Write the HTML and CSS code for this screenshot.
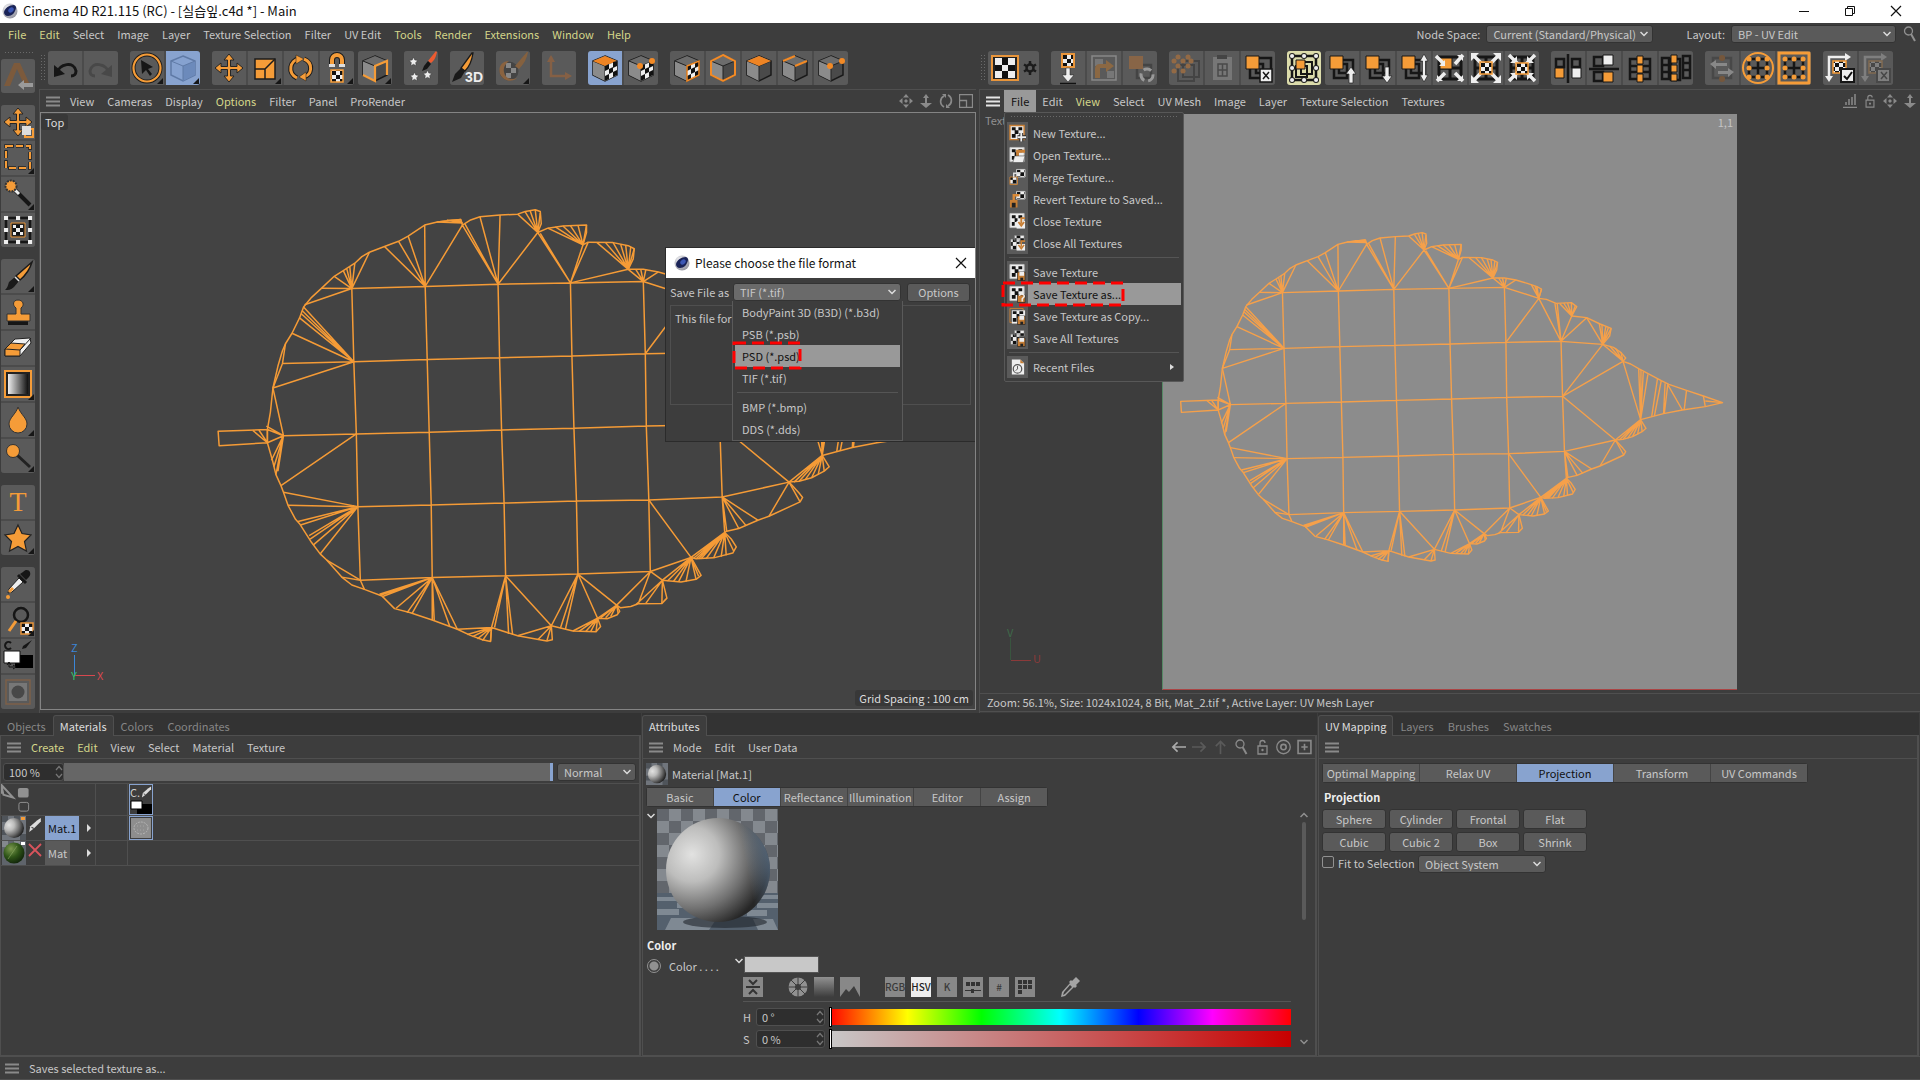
FILE: index.html
```html
<!DOCTYPE html>
<html lang="en">
<head>
<meta charset="utf-8">
<title>Cinema 4D R21.115 (RC) - [실습잎.c4d *] - Main</title>
<link rel="stylesheet" href="styles.css">
</head>
<body>
<svg class="defs" aria-hidden="true">
  <defs>
    <pattern id="chk" width="8" height="8" patternUnits="userSpaceOnUse"><path d="M0 0h8v8H0z" fill="#eee"/><path d="M0 0h4v4H0zM4 4h4v4H4z" fill="#111"/></pattern>
    <pattern id="floor" width="24" height="24" patternUnits="userSpaceOnUse"><path d="M0 0h24v24H0z" fill="#84898f"/><path d="M0 0h12v12H0zM12 12h12v12H12z" fill="#62666c"/></pattern>
    <radialGradient id="ball" cx=".25" cy=".35" r=".75"><stop offset="0" stop-color="#e2e2e1"/><stop offset=".35" stop-color="#bdbdbc"/><stop offset=".7" stop-color="#707070"/><stop offset="1" stop-color="#262626"/></radialGradient>
    <radialGradient id="green" cx=".35" cy=".3" r=".8"><stop offset="0" stop-color="#7d9a50"/><stop offset=".5" stop-color="#2f5518"/><stop offset="1" stop-color="#0c1c08"/></radialGradient>
    <radialGradient id="logoG" cx=".35" cy=".3" r=".8"><stop offset="0" stop-color="#f4f4f6"/><stop offset="1" stop-color="#8b8c98"/></radialGradient>
    <linearGradient id="bw"><stop offset="0" stop-color="#eee"/><stop offset="1" stop-color="#111"/></linearGradient>
    <linearGradient id="fade" x2="0" y2="1"><stop offset="0" stop-color="#919191"/><stop offset="1" stop-color="#3d3d3d"/></linearGradient>
    <linearGradient id="rim" y2=".3" x2="1" y1=".5"><stop offset=".75" stop-color="#6d90b5" stop-opacity="0"/><stop offset="1" stop-color="#7393b5" stop-opacity=".8"/></linearGradient>
  </defs>
  <symbol id="logo" viewBox="0 0 16 16"><circle cx="8" cy="8" r="7.500" fill="url(#logoG)"/><path d="M2 9C3 5 7 2 12 2c2 1 2 2 2 3-1 5-4 8-8 8-3 0-4-2-4-4z" fill="#1a2357"/><ellipse cx="9" cy="7" rx="3" ry="2.200" transform="rotate(-40 9 7)" fill="#3c57b5"/></symbol>
  <symbol id="burger" viewBox="0 0 14 11"><path d="M0 1.500h14M0 5.500h14M0 9.500h14" stroke="currentColor" stroke-width="2"/></symbol>
  <symbol id="undo" viewBox="0 0 34 34"><path d="M8 23C12 12 26 10 28 20c0 3-2 5-5 5" fill="none" stroke="currentColor" stroke-width="3"/><path d="M6 14v12l11-3z" fill="currentColor"/></symbol>
  <symbol id="cursor" viewBox="0 0 34 34"><circle cx="17" cy="17" r="13.500" fill="none" stroke="#1c1c1c" stroke-width="4"/><circle cx="17" cy="17" r="13.500" fill="none" stroke="#f59c38" stroke-width="2.200"/><path d="M11 9l12 7-5 2 4 5-2 2-4-6-4 4z" fill="#161616"/></symbol>
  <symbol id="cubeblue" viewBox="0 0 34 34"><path d="M17 5l12 5v14l-12 6-12-6V10z" fill="#86a2d0" stroke="#5f7aa6" stroke-width="1.500"/><path d="M17 15l12-5v14l-12 6z" fill="#6c8abb"/><path d="M5 10l12 5 12-5M17 15v15" fill="none" stroke="#5f7aa6"/></symbol>
  <symbol id="move" viewBox="0 0 34 34"><path d="M17 3l5 6h-3.500v6.500H25V12l6 5-6 5v-3.500h-6.500V25H22l-5 6-5-6h3.500v-6.500H9V22l-6-5 6-5v3.500h6.500V9H12z" fill="#f59c38" stroke="#252525"/></symbol>
  <symbol id="scale" viewBox="0 0 34 34"><path d="M7 8h20v20H7z" fill="#f59c38" stroke="#1c1c1c" stroke-width="1.500"/><path d="M7 18h10v10M17 18l10-10" fill="none" stroke="#1c1c1c" stroke-width="1.500"/></symbol>
  <symbol id="rotate" viewBox="0 0 34 34"><path d="M13 27C3 22 6 9 15 8M20 8c10 4 8 17-1 18" fill="none" stroke="#1c1c1c" stroke-width="5"/><path d="M13 27C3 22 6 9 15 8M20 8c10 4 8 17-1 18" fill="none" stroke="#f59c38" stroke-width="3"/><path d="M12 4l8 4-8 5zM22 21l-7 5 7 4z" fill="#f59c38" stroke="#1c1c1c" stroke-width=".5"/></symbol>
  <symbol id="magnet" viewBox="0 0 34 34"><path d="M12 15V9a5 5 0 0 1 10 0v6" fill="none" stroke="#1c1c1c" stroke-width="6"/><path d="M12 15V9a5 5 0 0 1 10 0v6" fill="none" stroke="#f59c38" stroke-width="4"/><path d="M9 13h6v3H9zM19 13h6v3h-6z" fill="#ddd"/><path d="M11 19h12v12H11z" fill="url(#chk)" stroke="#f59c38" stroke-width="1.500"/></symbol>
  <symbol id="cube" viewBox="0 0 34 34"><path d="M17 5l12 5v14l-12 6-12-6V10z" fill="#4a4a4a" stroke="#1a1a1a" stroke-width="1.500"/><path d="M5 10l12 5v15L5 24z" fill="#8b8b8b"/><path d="M17 5l12 5-12 5-12-5z" fill="#6c6c6c"/><path d="M5 10l12 5 12-5M17 15v15" fill="none" stroke="#222"/></symbol>
  <symbol id="cubeL" viewBox="0 0 34 34"><use href="#cube"/><path d="M5 24l12 6V15l12-5v14" fill="none" stroke="#f59c38" stroke-width="2.200"/></symbol>
  <symbol id="cubeTopChk" viewBox="0 0 34 34"><use href="#cube"/><path d="M17 5l12 5-12 5-12-5z" fill="#ee8424"/><path d="M17 15l12-5v14l-12 6z" fill="#eee"/><path d="M17 15l4-2v5l-4 2zM21 18l4-2v5l-4 2zM25 11l4-1v5l-4 2zM17 25l4-2v5l-4 2zM25 21l4-2v5l-4 2z" fill="#111"/></symbol>
  <symbol id="cubePtChk" viewBox="0 0 34 34"><use href="#cube"/><path d="M17 15l12-5v14l-12 6z" fill="#eee"/><path d="M17 15l4-2v5l-4 2zM21 18l4-2v5l-4 2zM25 11l4-1v5l-4 2zM17 25l4-2v5l-4 2zM25 21l4-2v5l-4 2z" fill="#111"/><circle cx="16" cy="15" r="3" fill="#f28a26"/><circle cx="28" cy="10" r="3" fill="#f28a26"/></symbol>
  <symbol id="cubeChkO" viewBox="0 0 34 34"><use href="#cube"/><path d="M17 15l12-5v14l-12 6z" fill="#eee"/><path d="M17 15l4-2v5l-4 2zM21 18l4-2v5l-4 2zM25 11l4-1v5l-4 2zM17 25l4-2v5l-4 2zM25 21l4-2v5l-4 2z" fill="#111"/><path d="M17 15l12-5v14l-12 6z" fill="none" stroke="#f28a26" stroke-width="1.500"/></symbol>
  <symbol id="cubeO" viewBox="0 0 34 34"><use href="#cube"/><path d="M17 4l12 6v14l-12 6-12-6V10z" fill="none" stroke="#f28a26" stroke-width="2"/></symbol>
  <symbol id="cubeT" viewBox="0 0 34 34"><use href="#cube"/><path d="M17 5l12 5-12 5-12-5z" fill="#ee8424"/></symbol>
  <symbol id="cubeE" viewBox="0 0 34 34"><use href="#cube"/><path d="M5 10l12-5M17 15l12-5" stroke="#f28a26" stroke-width="2"/></symbol>
  <symbol id="cubeP" viewBox="0 0 34 34"><use href="#cube"/><circle cx="16" cy="15" r="3" fill="#f28a26"/><circle cx="28" cy="10" r="3" fill="#f28a26"/></symbol>
  <symbol id="star" viewBox="0 0 34 34"><path d="M17 4l4 8.500 9 1.500-6.500 6.500 2 9.500L17 25.500 8.500 30l2-9.500L4 14l9-1.500z" fill="currentColor" stroke="#222" stroke-width="1.200"/></symbol>
  <symbol id="brush" viewBox="0 0 34 34"><path d="M31 3L15 17l4 4C25 16 29 10 31 3z" fill="#f59c38" stroke="#1a1a1a" stroke-width="1.500"/><path d="M14 18l4 4-5 6c-3 3-6 3-9 3 3-3 3-5 4-8z" fill="#1a1a1a"/><path d="M14 18l4 4" stroke="#ddd" stroke-width="1.500"/></symbol>
  <symbol id="starsbrush" viewBox="0 0 34 34"><path d="M32 0l-8 10 3 2c4-3 5-7 6-11z" fill="#ee5b30"/><path d="M24 10l3 3-4 5-5 2 2-5z" fill="#161616"/><g color="#eee"><use href="#star" x="4" y="5" width="11" height="11"/><use href="#star" x="5" y="20" width="11" height="11"/><use href="#star" x="18" y="18" width="11" height="11"/></g></symbol>
  <symbol id="brush3d" viewBox="0 0 34 34"><path d="M22 2L11 17l4 3c5-5 7-11 8-18z" fill="#f59c38" stroke="#1a1a1a" stroke-width="1.300"/><path d="M11 17l4 3-4 7-9 4 3-8z" fill="#1a1a1a"/></symbol>
  <symbol id="paintball" viewBox="0 0 34 34"><circle cx="13" cy="20" r="9.500" fill="#444"/><path d="M10 12h5v5h-5zM15 17h5v5h-5zM10 22h5v5h-5z" fill="#888"/><path d="M13 10C5 10 2 17 4 23c3 7 12 9 17 4-5 2-12 1-13-6-1-4 1-8 5-11z" fill="#8a6340"/><path d="M31 1L19 15l4 3c5-5 8-11 9-17z" fill="#85613f"/></symbol>
  <symbol id="axis" viewBox="0 0 34 34"><path d="M9 6v19h18" fill="none" stroke="#856045" stroke-width="2.500"/><path d="M5 11l4-7 4 7M23 21l7 4-7 4" fill="#856045"/></symbol>
  <symbol id="adobe" viewBox="0 0 34 34"><path d="M3 27L13 4h6l10 22h-6L16 10 9 27z" fill="#7c5a3c"/><path d="M17 26l6-5v3h9v4h-9v3z" fill="#9a9a9a"/></symbol>
  <symbol id="chkbox" viewBox="0 0 34 34"><path d="M4 5h26v24H4z" fill="#222" stroke="#e8953b" stroke-width="2"/><path d="M7 7h20v20H7z" fill="#eee"/><path d="M14 7h6v7h-6zM7 14h7v6H7zM20 14h7v6h-7zM14 20h6v7h-6z" fill="#111"/></symbol>
  <symbol id="gear" viewBox="0 0 14 14"><circle cx="7" cy="7" r="3.500" fill="none" stroke="#1c1c1c" stroke-width="2.500"/><path d="M7 0v3M7 11v3M1 3.500l2.500 1.500M13 3.500l-2.500 1.500M1 10.500l2.500-1.500M13 10.500l-2.500-1.500" stroke="#1c1c1c" stroke-width="2.500"/></symbol>
  <symbol id="chkdown" viewBox="0 0 34 34"><path d="M11 3h12v13H11z" fill="url(#chk)" stroke="#e8953b" stroke-width="2"/><path d="M15 17h4v7h4l-6 7-6-7h4z" fill="#eee" stroke="#222" stroke-width=".5"/><path d="M9 32.500h16" stroke="#111" stroke-width="1.500"/></symbol>
  <symbol id="revertD" viewBox="0 0 34 34"><path d="M5 5h24v24H5z" fill="none" stroke="#888" stroke-width="1.500"/><path d="M8 8h8v7H8zM20 20h7v7h-7z" fill="#777"/><path d="M8 27V18q0-5 5-5h6V9l8 6-8 6v-4h-6v10z" fill="#8b6843"/></symbol>
  <symbol id="recycle" viewBox="0 0 34 34"><path d="M14 14h14v13H14z" fill="none" stroke="#444" stroke-width="2.500"/><path d="M6 5h14v13H6z" fill="#886547"/><circle cx="24" cy="24" r="6" fill="none" stroke="#999" stroke-width="3" stroke-dasharray="8 4"/></symbol>
  <symbol id="dots" viewBox="0 0 34 34"><path d="M14 10h16v16H14zM9 14h16v16H9z" fill="none" stroke="#444" stroke-width="2"/><path d="M9 6h.1M19 6h.1M5 10h.1M14 10h.1M9 15h.1M19 15h.1M5 20h.1M14 20h.1M22 10h.1" stroke="#936a45" stroke-width="5" stroke-linecap="round"/></symbol>
  <symbol id="clipboard" viewBox="0 0 34 34"><path d="M8 6h19v23H8z" fill="#777"/><path d="M12 4h10v4H12z" fill="#444"/><path d="M13 13h9v12h-9zM13 19h9M17.500 13v12" fill="none" stroke="#4a4a4a" stroke-width="1.500"/></symbol>
  <symbol id="sqx" viewBox="0 0 34 34"><path d="M15 7h15v15H15zM9 13h13v14H9z" fill="none" stroke="#161616" stroke-width="2.500"/><path d="M5 5h13v13H5z" fill="#f59c38" stroke="#161616"/><path d="M19 18h12v13H19z" fill="#eee" stroke="#161616" stroke-width="1.500"/><path d="M22 21l6 7M28 21l-6 7" stroke="#161616" stroke-width="1.500"/></symbol>
  <symbol id="frameSel" viewBox="0 0 34 34"><path d="M5 5h24v24H5z" fill="none" stroke="#161616" stroke-width="2.500"/><path d="M14 11h11v12H14zM9 15h11v11H9z" fill="none" stroke="#161616" stroke-width="2"/><path d="M9 9h9v9H9z" fill="#f59c38" stroke="#161616"/><path d="M5 5h.1M17 5h.1M29 5h.1M5 17h.1M29 17h.1M5 29h.1M17 29h.1M29 29h.1" stroke="#222" stroke-width="6" stroke-linecap="round"/><path d="M5 5h.1M17 5h.1M29 5h.1M5 17h.1M29 17h.1M5 29h.1M17 29h.1M29 29h.1" stroke="#eee" stroke-width="4" stroke-linecap="round"/></symbol>
  <symbol id="sq" viewBox="0 0 34 34"><path d="M14 9h14v13H14zM9 13h13v14H9z" fill="none" stroke="#161616" stroke-width="2.500"/><path d="M5 5h13v13H5z" fill="#f59c38" stroke="#161616"/></symbol>
  <symbol id="sqUp" viewBox="0 0 34 34"><use href="#sq"/><path d="M26 16l5 7h-3v9h-4v-9h-3z" fill="#eee" stroke="#222" stroke-width=".7"/></symbol>
  <symbol id="sqDn" viewBox="0 0 34 34"><use href="#sq"/><path d="M26 32l5-7h-3v-9h-4v9h-3z" fill="#eee" stroke="#222" stroke-width=".7"/></symbol>
  <symbol id="sqUD" viewBox="0 0 34 34"><use href="#sq"/><path d="M27 3l4 7h-2.500v14H31l-4 7-4-7h2.500V10H23z" fill="#eee" stroke="#222" stroke-width=".7"/></symbol>
  <symbol id="arr4" viewBox="0 0 34 34"><path d="M6 6h22v22H6zM6 17h22M17 6v22" fill="none" stroke="#161616" stroke-width="3"/><path d="M4 4l9 9M30 4l-9 9M4 30l9-9M30 30l-9-9" stroke="#eee" stroke-width="3.500"/></symbol>
  <symbol id="exp1" viewBox="0 0 34 34"><path d="M6 6h22v22H6zM17 6v22M6 17h22" fill="none" stroke="#161616" stroke-width="3"/><path d="M7 7h12v11H7z" fill="#f59c38" stroke="#161616"/><path d="M3 5l8 8M30 4l-8 9M4 30l8-8M30 30l-8-8" stroke="#eee" stroke-width="3.500"/><path d="M12 9v6H6zM24 4h6v6zM4 24v6h6zM24 30h6v-6z" fill="#eee"/></symbol>
  <symbol id="exp2" viewBox="0 0 34 34"><use href="#arr4"/><path d="M2 2h8l-8 8zM24 2h8v8zM2 32v-8l8 8zM32 32v-8l-8 8z" fill="#eee"/><path d="M11 11h12v12H11z" fill="url(#chk)" stroke="#f59c38" stroke-width="1.500"/></symbol>
  <symbol id="exp3" viewBox="0 0 34 34"><use href="#arr4"/><path d="M12 5v7H5zM22 5v7h7zM12 29v-7H5zM22 29v-7h7z" fill="#eee"/><path d="M11 12h12v11H11z" fill="url(#chk)" stroke="#f59c38" stroke-width="1.500"/></symbol>
  <symbol id="mirH" viewBox="0 0 34 34"><path d="M5 8h8v8H5zM21 8h8v8h-8zM17 3v29" fill="none" stroke="#161616" stroke-width="2.500"/><path d="M4 17h9v10H4z" fill="#f59c38" stroke="#161616"/><path d="M21 17h9v10h-9z" fill="#eee" stroke="#161616"/></symbol>
  <symbol id="mirV" viewBox="0 0 34 34"><path d="M7 6h9v9H7zM7 21h9v9H7zM2 18h30" fill="none" stroke="#161616" stroke-width="2.500"/><path d="M16 4h10v10H16z" fill="#eee" stroke="#161616"/><path d="M16 21h10v10H16z" fill="#f59c38" stroke="#161616"/></symbol>
  <symbol id="col1" viewBox="0 0 34 34"><path d="M7 8h20v20H7zM7 15h20M7 21h20" fill="none" stroke="#161616" stroke-width="2.500"/><path d="M14 5h6v8h-6zM14 14h6v8h-6zM14 23h6v8h-6z" fill="#f59c38" stroke="#161616"/></symbol>
  <symbol id="col2" viewBox="0 0 34 34"><path d="M3 7h7v21H3zM3 14h7M3 21h7M24 5h7v22h-7zM24 12h7M24 19h7M12 8h9v21h-9z" fill="none" stroke="#161616" stroke-width="2.500"/><path d="M12 4h6v8h-6zM12 14h6v7h-6zM12 23h6v7h-6z" fill="#f59c38" stroke="#161616"/></symbol>
  <symbol id="swapD" viewBox="0 0 34 34"><path d="M8 7h18v20H8z" fill="none" stroke="#484848" stroke-width="2.500"/><path d="M17 7h.1M17 28h.1" stroke="#75573c" stroke-width="6" stroke-linecap="round"/><path d="M5 13l6-4v3h11v3H11v3zM29 21l-6-4v3H13v3h10v3z" fill="#888"/></symbol>
  <symbol id="gridpts" viewBox="0 0 34 34"><path d="M8 8h18v18H8zM17 8v18M8 17h18" fill="none" stroke="#161616" stroke-width="2.500"/><path d="M8 8h.1M17 8h.1M26 8h.1M8 17h.1M26 17h.1M8 26h.1M17 26h.1M26 26h.1" stroke="#f59c38" stroke-width="5" stroke-linecap="round"/></symbol>
  <symbol id="gridC" viewBox="0 0 34 34"><circle cx="17" cy="17" r="15" fill="none" stroke="#f59c38" stroke-width="2"/><use href="#gridpts"/></symbol>
  <symbol id="gridS" viewBox="0 0 34 34"><path d="M2 2h30v30H2z" fill="none" stroke="#f59c38" stroke-width="3"/><use href="#gridpts"/></symbol>
  <symbol id="fitOk" viewBox="0 0 34 34"><path d="M6 28V6h19" fill="none" stroke="#eee" stroke-width="2.500"/><path d="M22 2l6 4-6 4M2 25l4 6 4-6" fill="#eee"/><path d="M10 10h13v12H10z" fill="url(#chk)" stroke="#f59c38" stroke-width="1.500"/><path d="M18 18h13v13H18z" fill="#eee" stroke="#161616" stroke-width="2"/></symbol>
  <symbol id="marquee" viewBox="0 0 34 34"><path d="M5 5h24v22H5z" fill="none" stroke="#252525" stroke-width="3.500" stroke-dasharray="8 2"/><path d="M5 5h24v22H5z" fill="none" stroke="#f59c38" stroke-width="2" stroke-dasharray="7 3"/></symbol>
  <symbol id="wand" viewBox="0 0 34 34"><path d="M14 13l15 15" stroke="#161616" stroke-width="4"/><path d="M14 13l4 4" stroke="#eee" stroke-width="3"/><circle cx="10" cy="9" r="5.500" fill="#f59c38" stroke="#333" stroke-width="2" stroke-dasharray="2 1"/></symbol>
  <symbol id="chkframe" viewBox="0 0 34 34"><path d="M5 5h24v24H5z" fill="none" stroke="#161616" stroke-width="2.500"/><path d="M5 5h.1M17 5h.1M29 5h.1M5 17h.1M29 17h.1M5 29h.1M17 29h.1M29 29h.1" stroke="#eee" stroke-width="4" stroke-linecap="square"/><path d="M10 10h14v14H10z" fill="#222" stroke="#e8953b"/><path d="M12 12h10v10H12z" fill="#eee"/><path d="M15 12h4v3h-4zM12 15h3v4h-3zM19 15h3v4h-3zM15 19h4v3h-4z" fill="#111"/></symbol>
  <symbol id="stamp" viewBox="0 0 34 34"><path d="M7 26h20v4H7z" fill="#161616"/><path d="M17 5c5 0 7 5 3 8v6h9v7H6v-7h9v-6c-4-3-3-8 2-8z" fill="#f59c38" stroke="#333"/></symbol>
  <symbol id="eraser" viewBox="0 0 34 34"><path d="M4 18L14 8l15-1 1 5-11 13H4z" fill="#eee" stroke="#222"/><path d="M4 18l6-6 14 1-5 6v6H4z" fill="#f59c38" stroke="#222"/><path d="M4 18l15 1 11-12" fill="none" stroke="#222"/></symbol>
  <symbol id="gradient" viewBox="0 0 34 34"><path d="M4 4h26v26H4z" fill="#222" stroke="#f59c38" stroke-width="2"/><path d="M7 7h20v20H7z" fill="url(#bw)"/></symbol>
  <symbol id="drop" viewBox="0 0 34 34"><path d="M17 4c3 8 9 11 9 17a9 9 0 0 1-18 0c0-6 7-10 9-17z" fill="#f59c38" stroke="#333"/></symbol>
  <symbol id="dodge" viewBox="0 0 34 34"><path d="M16 16l13 12" stroke="#222" stroke-width="3"/><circle cx="12" cy="12" r="6.500" fill="#f59c38" stroke="#333"/></symbol>
  <symbol id="dropper" viewBox="0 0 34 34"><path d="M22 5c4-5 10 0 6 5l-3 3-6-6z" fill="#161616"/><path d="M17 8l8 8" stroke="#161616" stroke-width="3"/><path d="M18 11l4 4-11 10-4 1 1-4z" fill="#eee" stroke="#222"/><path d="M8 25l4-4" stroke="#f59c38" stroke-width="3"/><circle cx="7" cy="30" r="2" fill="#f59c38"/></symbol>
  <symbol id="zoomchk" viewBox="0 0 34 34"><circle cx="20" cy="12" r="7" fill="none" stroke="#161616" stroke-width="2.500"/><path d="M15 18L8 28" stroke="#f59c38" stroke-width="3"/><path d="M20 20h12v11H20z" fill="url(#chk)" stroke="#e8953b" stroke-width="1.500"/></symbol>
  <symbol id="colors" viewBox="0 0 34 34"><path d="M10 4a3.500 3.500 0 1 0 0 5" fill="none" stroke="#161616" stroke-width="2"/><path d="M31 1l-9 6-1 3 4-1z" fill="#161616"/><path d="M14 16h18v13H14z" fill="#000"/><path d="M3 12h16v12H3z" fill="#fff" stroke="#111"/><path d="M8 24v4h5M6 26l2-3 2 3M12 26l3 2-3 2" fill="none" stroke="#111"/></symbol>
  <symbol id="maskD" viewBox="0 0 34 34"><path d="M5 5h24v24H5z" fill="none" stroke="#7d6049" stroke-width="1.500"/><path d="M8 8h18v18H8z" fill="#777"/><circle cx="17" cy="17" r="6.500" fill="#484848"/></symbol>
  <symbol id="nmove" viewBox="0 0 14 14"><path d="M7 0l3 3.500H4zM7 14l3-3.500H4zM0 7l3.500-3v6zM14 7l-3.500-3v6zM7 5l2 2-2 2-2-2z" fill="currentColor"/></symbol>
  <symbol id="nud" viewBox="0 0 14 14"><path d="M7 0l3 4H4zM6 3h2v7H6zM1 9h12l-6 5z" fill="currentColor"/></symbol>
  <symbol id="nrot" viewBox="0 0 14 14"><path d="M5 13C0 10 1 4 5 2M9 1c5 3 4 9 0 11" fill="none" stroke="currentColor" stroke-width="1.700"/><path d="M3 0h4v4zM11 14H7v-4z" fill="currentColor"/></symbol>
  <symbol id="nmax" viewBox="0 0 14 14"><path d="M.5.500h13v13H.5zM.5 6.500h7v7M7.500 6.500h-2" fill="none" stroke="currentColor" stroke-width="1.300"/></symbol>
  <symbol id="nbars" viewBox="0 0 14 14"><path d="M0 13.500h14M3 11V8M6 11V5M9 11V3M12 11V0" stroke="currentColor" stroke-width="1.500"/></symbol>
  <symbol id="lock" viewBox="0 0 14 16"><path d="M2.500 7h9v8h-9zM4.500 7V4a2.500 2.500 0 0 1 5 0" fill="none" stroke="currentColor" stroke-width="1.300"/><circle cx="7" cy="11" r="1.200" fill="currentColor"/></symbol>
  <symbol id="glass" viewBox="0 0 14 16"><circle cx="5.500" cy="5" r="4" fill="none" stroke="currentColor" stroke-width="1.300"/><path d="M8 8l4 7" stroke="currentColor" stroke-width="2"/></symbol>
  <symbol id="target" viewBox="0 0 14 14"><circle cx="7" cy="7" r="6.300" fill="none" stroke="currentColor" stroke-width="1.200"/><circle cx="7" cy="7" r="2.500" fill="none" stroke="currentColor" stroke-width="1.500"/></symbol>
  <symbol id="plusbox" viewBox="0 0 14 14"><path d="M1 1h12v12H1zM7 4v6M4 7h6" fill="none" stroke="currentColor" stroke-width="1.500"/></symbol>
  <symbol id="arrow" viewBox="0 0 16 12"><path d="M16 6H2M7 1L2 6l5 5" fill="none" stroke="currentColor" stroke-width="1.800"/></symbol>
  <symbol id="chev" viewBox="0 0 8 6"><path d="M.5 1L4 4.500 7.500 1" fill="none" stroke="currentColor" stroke-width="1.500"/></symbol>
  <symbol id="spin" viewBox="0 0 8 14"><path d="M1 5l3-3.500L7 5M1 9l3 3.500L7 9" fill="none" stroke="#777" stroke-width="1.200"/></symbol>
  <symbol id="pencil" viewBox="0 0 12 12"><path d="M11 0v3L5 9 1 12l1-5 6-5z" fill="#ddd"/><path d="M3 8l2 1" stroke="#444"/></symbol>
  <symbol id="mball" viewBox="0 0 24 24"><path d="M0 0h24v24H0z" fill="#70757c"/><path d="M0 0h6v6H0zM12 0h6v6h-6zM0 14h6v5H0zM18 18h6v6h-6z" fill="#4f545a"/><circle cx="12" cy="12" r="10" fill="url(#ball)"/></symbol>
  <symbol id="mgreen" viewBox="0 0 24 24"><path d="M0 0h24v24H0z" fill="#5f646b"/><path d="M0 0h6v6H0zM12 0h6v6h-6z" fill="#84888e"/><circle cx="12" cy="12" r="10.500" fill="url(#green)"/><path d="M6 18L15 5" stroke="#8fae68" stroke-width=".8" opacity=".7"/></symbol>
  <symbol id="tNew" viewBox="0 0 18 18"><path d="M1 1h15v15H1z" fill="#eee" stroke="#c87f35" stroke-width="1.500"/><path d="M3 3h4v3H3zM10 3h4v3h-4zM6 6h4v4H6zM3 10h4v4H3z" fill="#111"/><path d="M13 9v9M9 13.500h9" stroke="#222" stroke-width="4"/><path d="M13 9v9M9 13.500h9" stroke="#eee" stroke-width="2"/></symbol>
  <symbol id="tOpen" viewBox="0 0 18 18"><path d="M1 1h15v15H1z" fill="#eee" stroke="#bbb"/><path d="M3 3h4v3H3zM10 3h4v3h-4zM6 6h4v4H6zM3 10h3v4H3z" fill="#111"/><path d="M9 10V5h8" fill="none" stroke="#c87f35" stroke-width="3"/><path d="M6 10h11l-2 7H4z" fill="#eee" stroke="#444" stroke-width=".6"/></symbol>
  <symbol id="tMerge" viewBox="0 0 18 18"><path d="M8 1h9v8H8z" fill="url(#chk)" stroke="#ccc"/><path d="M1 9h8v8H1z" fill="url(#chk)" stroke="#c87f35"/><path d="M5 9V5h7" fill="none" stroke="#ddd" stroke-width="1.500"/></symbol>
  <symbol id="tRevert" viewBox="0 0 18 18"><path d="M8 1h9v8H8z" fill="url(#chk)" stroke="#ccc"/><path d="M1 10h8v8H1z" fill="#c87f35"/><path d="M3 13h4v5H3z" fill="#222"/><path d="M5 10V5h6" fill="none" stroke="#d98a38" stroke-width="2.500"/></symbol>
  <symbol id="tClose" viewBox="0 0 18 18"><path d="M1 1h15v15H1z" fill="#eee" stroke="#bbb"/><path d="M3 3h4v3H3zM10 3h4v3h-4zM6 6h3v4H6zM3 10h3v4H3z" fill="#111"/><path d="M8 9h9v8H8z" fill="#eee"/><path d="M17 6h-4v6M10 10l3 4 3-4" fill="none" stroke="#c87f35" stroke-width="2"/></symbol>
  <symbol id="tCloseAll" viewBox="0 0 18 18"><path d="M6 1h10v6H6zM2 5h9v11H2z" fill="url(#chk)" stroke="#888" stroke-width=".6"/><path d="M8 10h9v7H8z" fill="#eee"/><path d="M17 7h-4v6M10 11l3 4 3-4" fill="none" stroke="#c87f35" stroke-width="1.700"/></symbol>
  <symbol id="tSave" viewBox="0 0 18 18"><path d="M1 1h15v15H1z" fill="#eee" stroke="#bbb"/><path d="M3 3h4v3H3zM10 3h4v3h-4zM6 6h4v4H6zM3 10h4v4H3z" fill="#111"/><path d="M9 9h8v9H9z" fill="#c87f35" stroke="#222" stroke-width=".7"/><path d="M11 9h5v4h-5z" fill="#eee"/><path d="M12 15h3v3h-3z" fill="#222"/></symbol>
  <symbol id="tCopy" viewBox="0 0 18 18"><path d="M1 1h14v15H1z" fill="none" stroke="#c87f35"/><path d="M3 3h14v14H3z" fill="#eee"/><path d="M4 4h4v3H4zM11 4h4v3h-4zM8 7h3v4H8zM4 11h4v4H4z" fill="#111"/><path d="M9 9h8v9H9z" fill="#c87f35" stroke="#222" stroke-width=".7"/><path d="M11 9h5v4h-5z" fill="#eee"/><path d="M12 15h3v3h-3z" fill="#222"/></symbol>
  <symbol id="tSaveAll" viewBox="0 0 18 18"><path d="M6 1h10v6H6zM2 5h9v11H2z" fill="url(#chk)" stroke="#888" stroke-width=".6"/><path d="M9 9h8v9H9z" fill="#c87f35" stroke="#222" stroke-width=".7"/><path d="M11 9h5v4h-5z" fill="#eee"/><path d="M12 15h3v3h-3z" fill="#222"/></symbol>
  <symbol id="tSaveAs" viewBox="0 0 18 18"><path d="M1 1h15v15H1z" fill="#eee" stroke="#bbb"/><path d="M3 3h4v3H3zM10 3h4v3h-4zM6 6h4v4H6zM3 10h4v4H3z" fill="#111"/><path d="M9 10h8v8H9z" fill="#c87f35" stroke="#222" stroke-width=".7"/><path d="M11 11c1-3 6-2 5 1l-2 2v3" fill="none" stroke="#eee" stroke-width="1.500"/></symbol>
  <symbol id="tRecent" viewBox="0 0 18 18"><path d="M3 1h9l4 4v12H3z" fill="#eee"/><path d="M12 1l4 4h-4z" fill="#c87f35"/><circle cx="9" cy="11" r="4.500" fill="none" stroke="#555" stroke-width="1.300"/><path d="M9 8v3l-2 2" fill="none" stroke="#555"/></symbol>
  <symbol id="leaf" viewBox="0 0 1568 1110" preserveAspectRatio="none">
    <g fill="none" stroke-linejoin="round">
    <path vector-effect="non-scaling-stroke" d="M152 570L158 530 163 475 173 425 182 390 188 374 201 350 216 315 224 290 240 268 260 247 285 220 303 207 326 190 340 175 355 165 385 152 413 140 432 128 465 103 490 96 520 92 537 90 540 103 555 92 575 84 615 80 650 78 665 72 685 68 695 72 697 100 690 120 710 110 740 105 787 103 787 120 780 148 790 142 840 143 870 150 882 157 880 180 870 204 900 204 930 210 960 220 985 230 997 237 990 265 1010 268 1035 280 1075 278 1089 290 1076 318 1115 323 1150 342 1179 355 1175 378 1157 403 1185 412 1205 428 1217 444 1210 454 1230 462 1251 476 1310 512 1330 523 1376 541 1420 558 1470 578 1425 590 1365 600 1316 611 1256 629 1270 655 1260 665 1235 680 1210 688 1190 690 1210 715 1217 725 1212 735 1150 768 1128 777 1090 796 1066 802 1062 805 1075 820 1085 838 1078 852 1040 863 1005 865 995 862 1015 903 1005 912 975 918 938 914 947 955 937 967 890 968 875 974 855 977 847 971 853 985 848 993 828 1002 809 1001 815 1020 806 1032 760 1030 717 1018 719 1050 708 1053 650 1041 598 1022 596 1054 580 1050 556 1040 530 1026 480 1005 435 988 405 979 380 950 345 935 320 925 300 907 270 868 257 854 240 828 216 785 208 775 193 743 184 713 179 698 169 673 162 640 157 620 152 600zM152 570L54 574 56 607 152 600"/>
    <path vector-effect="non-scaling-stroke" d="M320 248L466 243 611 238 755 235 900 232M324 415L470 410 614 406 758 402 904 397 1048 394 1157 403M184 584L329 580 474 576 618 571 762 567 906 562 1052 559M332 746L478 742 623 738 767 733 911 731 1057 724 1190 690M300 907L337 914 480 908 626 904 770 900 914 894 995 862M320 248L324 415 329 580 332 746 337 914M466 243L470 410 474 576 478 742 480 908M611 238L614 406 618 571 623 738 626 904M755 235L758 402 762 567 767 733 770 900M900 232L904 397 906 562 911 731 914 894M1048 394L1052 559 1057 724"/>
    <path vector-effect="non-scaling-stroke" d="M226 285L320 248 260 247M285 220L320 248 303 207M310 203L320 248 316 198M326 190L320 248 355 165M385 152L466 243 413 140M432 128L466 243 465 103M540 103L466 243M540 103L611 238 545 100M575 84L611 238 615 80M690 120L611 238M690 120L755 235 695 122M780 148L755 235 790 143M870 204L755 235M870 204L900 232 885 204M895 204L900 232 905 205M930 210L900 232 990 265 904 397M990 265L1048 394 1032 280M1038 281L1048 394 1076 318M1115 323L1048 394M1115 323L1157 403 1148 340M1155 344L1157 403 1165 350M1172 352L1157 403 1179 355M650 78L690 120 665 73M675 71L690 120 685 68M695 75L690 120M710 110L780 148 725 107M740 105L780 148 755 104M770 103L780 148 787 103M808 143L870 204 825 143M840 143L870 204 855 147M865 149L870 204 875 153M882 157L870 204M970 223L990 265 980 228M985 230L990 265 997 237M1045 281L1076 318 1055 279M1065 279L1076 318 1075 279M1085 288L1076 318M537 90L490 96 540 98 510 92 539 94M1157 403L1210 454 1175 408M1190 414L1210 454 1205 428M1157 403L1052 559 1210 454M1190 690L1052 559M1210 454L1256 629 1251 476M1257 480L1256 629 1263 485M1275 493L1256 629M1285 620L1300 507M1292 618L1310 512M1316 611L1320 520M1318 610L1327 524 1365 600M1370 598L1376 541M1425 590L1420 558M1470 578L1425 573"/>
    <path vector-effect="non-scaling-stroke" d="M224 290L324 415 221 298M219 305L324 415 216 315M201 350L324 415 182 419M188 374L182 419 163 475M324 415L163 475 184 584 152 570M150 562L184 584 152 600M160 640L184 584 165 655M169 673L184 584 173 665M152 570L152 600 123 572M135 571L152 600M329 580L179 698M184 713L332 746 193 743M213 780L332 746 218 788M235 812L332 746 237 820M243 834L332 746 257 854M270 868L337 914 345 935M375 946L480 908 380 952M378 948L480 908 408 978M430 988L480 908 440 990M480 1005L480 908 484 1006M515 1020L480 908 530 1026M598 1022L626 904 604 1022M632 1037L626 904 640 1039M626 904L717 1018 770 900 735 1024M745 1026L770 900 809 1001M770 900L847 971 914 894 890 968M914 894L938 914M650 1041L717 1018 690 1050M708 1053L717 1018M530 1026L598 1022 550 1038M560 1043L598 1022 570 1048M580 1052L598 1022 596 1054M760 1030L809 1001 772 1031M785 1032L809 1001 795 1032M806 1032L809 1001M815 1000L847 971 825 1000M835 997L847 971 850 990M809 1001L847 971M885 970L938 914 905 967M937 967L938 914M911 731L995 862 938 914M948 916L995 862 960 917M970 918L995 862 985 917M1005 912L995 862 1010 905M995 862L1062 805 1000 864M1005 865L1062 805 1010 865M1015 865L1062 805 1025 865M1040 863L1062 805 1055 860M1065 857L1062 805 1080 848M1057 724L1062 805 1057 724 1066 802M1090 796L1057 724 1105 790M1128 777L1057 724M1150 768L1190 690 1212 735M1190 690L1256 629 1200 690M1210 688L1256 629 1222 685M1235 680L1256 629 1248 673M1260 665L1256 629"/>
    </g>
  </symbol>
</svg>

<header class="titlebar">
  <svg class="i16"><use href="#logo"/></svg>
  <h1>Cinema 4D R21.115 (RC) - [실습잎.c4d *] - Main</h1>
  <div class="winbtns">
    <button aria-label="Minimize"><svg class="i12" viewBox="0 0 12 12"><path d="M1 6.500h10" stroke="#111"/></svg></button>
    <button aria-label="Restore"><svg class="i12" viewBox="0 0 12 12"><path d="M1.500 3.500h7v7h-7zM3.500 3.500v-2h7v7h-2" fill="none" stroke="#111"/></svg></button>
    <button aria-label="Close"><svg class="i12" viewBox="0 0 12 12"><path d="M1 1l10 10M11 1L1 11" stroke="#111" stroke-width="1.200"/></svg></button>
  </div>
</header>

<div class="menubar">
  <nav class="menu">
    <button class="y">File</button><button class="y">Edit</button><button>Select</button><button>Image</button><button>Layer</button><button>Texture Selection</button><button>Filter</button><button>UV Edit</button><button class="y">Tools</button><button class="y">Render</button><button class="y">Extensions</button><button class="y">Window</button><button class="y">Help</button>
  </nav>
  <div class="picks">
    <label for="space">Node Space:</label><select id="space" class="w-space"><option>Current (Standard/Physical)</option></select>
    <label for="layout" class="lay">Layout:</label><select id="layout" class="w-layout"><option>BP - UV Edit</option></select>
    <svg class="i16 dim"><use href="#glass"/></svg>
  </div>
</div>

<main class="work">
  <aside class="side">
    <div class="grip-h"></div>
    <div class="group"><button aria-label="Exchange"><svg><use href="#adobe"/></svg></button></div>
    <div class="group"><button aria-label="Move"><svg><use href="#move"/><path d="M24 24h8v8h-8z" fill="none" stroke="#f59c38" stroke-width="2"/><path d="M21 21h9v9h-9z" fill="#ddd"/></svg></button><button class="more" aria-label="Rectangle selection"><svg><use href="#marquee"/></svg></button><button class="more" aria-label="Magic wand"><svg><use href="#wand"/></svg></button><button aria-label="Transform bitmap"><svg><use href="#chkframe"/></svg></button></div>
    <div class="group"><button class="more" aria-label="Brush"><svg><use href="#brush"/></svg></button><button aria-label="Clone"><svg><use href="#stamp"/></svg></button><button aria-label="Eraser"><svg><use href="#eraser"/></svg></button><button class="more" aria-label="Gradient"><svg><use href="#gradient"/></svg></button><button class="more" aria-label="Blur"><svg><use href="#drop"/></svg></button><button class="more" aria-label="Dodge"><svg><use href="#dodge"/></svg></button></div>
    <div class="group"><button class="type">T</button><button class="more or" aria-label="Shape"><svg><use href="#star"/></svg></button></div>
    <div class="group"><button aria-label="Color picker"><svg><use href="#dropper"/></svg></button><button class="more" aria-label="Magnify"><svg><use href="#zoomchk"/></svg></button><button aria-label="Colors"><svg><use href="#colors"/></svg></button><button aria-label="Mask"><svg><use href="#maskD"/></svg></button></div>
  </aside>

  <section class="pane left">
    <div class="tools">
      <div class="grip-v"></div>
      <div class="group"><button class="dk" aria-label="Undo"><svg><use href="#undo"/></svg></button><button class="off flip" aria-label="Redo"><svg><use href="#undo"/></svg></button></div>
      <div class="group"><button class="more" aria-label="Live selection"><svg><use href="#cursor"/></svg></button><button class="on more" aria-label="Model"><svg><use href="#cubeblue"/></svg></button></div>
      <div class="group tight"><button aria-label="Move"><svg><use href="#move"/></svg></button><button class="more" aria-label="Scale"><svg><use href="#scale"/></svg></button><button aria-label="Rotate"><svg><use href="#rotate"/></svg></button><button class="more" aria-label="Snap"><svg><use href="#magnet"/></svg></button></div>
      <div class="group"><button class="more" aria-label="Coordinates"><svg><use href="#cubeL"/></svg></button></div>
      <div class="group"><button aria-label="Paint setup wizard"><svg><use href="#starsbrush"/></svg></button></div>
      <div class="group"><button class="b3d" aria-label="3D painting"><svg><use href="#brush3d"/></svg><span>3D</span></button></div>
      <div class="group"><button class="more" aria-label="Projection painting"><svg><use href="#paintball"/></svg></button></div>
      <div class="group"><button aria-label="Axis"><svg><use href="#axis"/></svg></button></div>
      <div class="group"><button class="on" aria-label="UV polygons"><svg><use href="#cubeTopChk"/></svg></button><button aria-label="UV points"><svg><use href="#cubePtChk"/></svg></button></div>
      <div class="group"><button aria-label="Texture"><svg><use href="#cubeChkO"/></svg></button><button aria-label="Object"><svg><use href="#cubeO"/></svg></button><button aria-label="Polygons"><svg><use href="#cubeT"/></svg></button><button aria-label="Edges"><svg><use href="#cubeE"/></svg></button><button aria-label="Points"><svg><use href="#cubeP"/></svg></button></div>
    </div>
    <div class="panel">
      <div class="bar">
        <svg class="burger"><use href="#burger"/></svg>
        <nav class="menu"><button>View</button><button>Cameras</button><button>Display</button><button class="y">Options</button><button>Filter</button><button>Panel</button><button>ProRender</button></nav>
        <div class="navi"><svg><use href="#nmove"/></svg><svg><use href="#nud"/></svg><svg><use href="#nrot"/></svg><svg><use href="#nmax"/></svg></div>
      </div>
      <div class="view3d">
        <span class="tag tl">Top</span>
        <span class="tag br">Grid Spacing : 100 cm</span>
        <svg class="leafL"><use href="#leaf"/></svg>
        <svg class="axes axL" viewBox="0 0 40 44"><path d="M8.500 15v21" stroke="#3b86d8"/><path d="M9 35.500h20" stroke="#d8484f"/><g font-size="11"><text x="5" y="12" fill="#3b86d8">Z</text><text x="5" y="40" fill="#35c06a">Y</text><text x="31" y="40" fill="#d8484f">X</text></g></svg>
        <div class="dialog" role="dialog" aria-labelledby="dt">
          <div class="dtitle"><svg class="i16"><use href="#logo"/></svg><h2 id="dt">Please choose the file format</h2><button aria-label="Close"><svg class="i12" viewBox="0 0 12 12"><path d="M1 1l10 10M11 1L1 11" stroke="#111" stroke-width="1.200"/></svg></button></div>
          <div class="drow"><label for="fmt">Save File as</label>
            <div class="combo"><select id="fmt"><option>TIF (*.tif)</option></select>
              <div class="drop" role="listbox">
                <div role="option">BodyPaint 3D (B3D) (*.b3d)</div><div role="option">PSB (*.psb)</div><div role="option" class="sel">PSD (*.psd)<svg class="mark mk1"><rect x="2" y="2" width="66" height="25"/></svg></div><div role="option">TIF (*.tif)</div><hr><div role="option">BMP (*.bmp)</div><div role="option">DDS (*.dds)</div>
              </div></div>
            <button class="btn">Options</button></div>
          <div class="dbox">This file forr</div>
        </div>
      </div>
    </div>
  </section>

  <section class="pane right">
    <div class="tools">
      <div class="grip-v"></div>
      <div class="group"><button class="wide" aria-label="Texture settings"><svg><use href="#chkbox"/></svg><svg class="i14"><use href="#gear"/></svg></button></div>
      <div class="group"><button aria-label="Set from texture"><svg><use href="#chkdown"/></svg></button><button aria-label="Revert"><svg><use href="#revertD"/></svg></button><button aria-label="Recycle"><svg><use href="#recycle"/></svg></button></div>
      <div class="group"><button aria-label="Store UV"><svg><use href="#dots"/></svg></button><button aria-label="Restore UV"><svg><use href="#clipboard"/></svg></button><button aria-label="Clear UV"><svg><use href="#sqx"/></svg></button></div>
      <div class="group tight"><button class="cream" aria-label="UV transform"><svg><use href="#frameSel"/></svg></button></div>
      <div class="group"><button aria-label="Raise"><svg><use href="#sqUp"/></svg></button><button aria-label="Lower"><svg><use href="#sqDn"/></svg></button><button aria-label="Stretch"><svg><use href="#sqUD"/></svg></button><button aria-label="Fit selection"><svg><use href="#exp1"/></svg></button><button aria-label="Expand"><svg><use href="#exp2"/></svg></button><button aria-label="Shrink UV"><svg><use href="#exp3"/></svg></button></div>
      <div class="group"><button aria-label="Mirror U"><svg><use href="#mirH"/></svg></button><button aria-label="Mirror V"><svg><use href="#mirV"/></svg></button><button aria-label="Column"><svg><use href="#col1"/></svg></button><button aria-label="Spread"><svg><use href="#col2"/></svg></button></div>
      <div class="group"><button aria-label="Swap"><svg><use href="#swapD"/></svg></button><button aria-label="Circle boundary"><svg><use href="#gridC"/></svg></button><button aria-label="Square boundary"><svg><use href="#gridS"/></svg></button></div>
      <div class="group"><button aria-label="Apply"><svg><use href="#fitOk"/><path d="M21 25l3 3 5-7" fill="none" stroke="#111" stroke-width="2"/></svg></button><button class="faint" aria-label="Discard"><svg><use href="#fitOk"/><path d="M22 21l6 7M28 21l-6 7" stroke="#111" stroke-width="1.500"/></svg></button></div>
    </div>
    <div class="panel">
      <div class="bar">
        <svg class="burger lit"><use href="#burger"/></svg>
        <nav class="menu"><div class="host"><button class="open">File</button>
          <div class="popup" role="menu">
            <div class="grip-h"></div>
            <button role="menuitem"><svg><use href="#tNew"/></svg>New Texture...</button>
            <button role="menuitem"><svg><use href="#tOpen"/></svg>Open Texture...</button>
            <button role="menuitem"><svg><use href="#tMerge"/></svg>Merge Texture...</button>
            <button role="menuitem"><svg><use href="#tRevert"/></svg>Revert Texture to Saved...</button>
            <button role="menuitem"><svg><use href="#tClose"/></svg>Close Texture</button>
            <button role="menuitem"><svg><use href="#tCloseAll"/></svg>Close All Textures</button>
            <hr>
            <button role="menuitem"><svg><use href="#tSave"/></svg>Save Texture</button>
            <button role="menuitem" class="sel"><svg><use href="#tSaveAs"/></svg>Save Texture as...</button>
            <button role="menuitem"><svg><use href="#tCopy"/></svg>Save Texture as Copy...</button>
            <button role="menuitem"><svg><use href="#tSaveAll"/></svg>Save All Textures</button>
            <hr>
            <button role="menuitem" class="sub"><svg><use href="#tRecent"/></svg>Recent Files</button>
            <svg class="mark mk2"><rect x="2" y="2" width="120" height="22"/></svg>
          </div></div><button>Edit</button><button class="y">View</button><button>Select</button><button>UV Mesh</button><button>Image</button><button>Layer</button><button>Texture Selection</button><button>Textures</button></nav>
        <div class="navi"><svg><use href="#nbars"/></svg><svg><use href="#lock"/></svg><svg><use href="#nmove"/></svg><svg><use href="#nud"/></svg></div>
      </div>
      <div class="texview">
        <span class="tlabel">Text</span>
        <div class="texture"><svg class="leafR"><use href="#leaf"/></svg><span>1,1</span></div>
        <svg class="axes axR" viewBox="0 0 40 44"><path d="M5.500 13v22" stroke="#39553f"/><path d="M6 35.500h20" stroke="#8b3a3a"/><g font-size="11"><text x="2" y="12" fill="#3f6a4a">V</text><text x="28" y="38" fill="#8b3a3a">U</text></g></svg>
      </div>
      <div class="tstatus">Zoom: 56.1%, Size: 1024x1024, 8 Bit, Mat_2.tif *, Active Layer: UV Mesh Layer</div>
    </div>
  </section>
</main>

<div class="lower">
  <section class="dock mats">
    <div class="tabs"><button>Objects</button><button class="act">Materials</button><button>Colors</button><button>Coordinates</button></div>
    <div class="bar"><svg class="burger"><use href="#burger"/></svg><nav class="menu"><button class="y">Create</button><button class="y">Edit</button><button>View</button><button>Select</button><button>Material</button><button>Texture</button></nav></div>
    <div class="oprow"><div class="num"><input aria-label="Opacity" value="100 %"><svg><use href="#spin"/></svg></div><input class="opac" type="range" min="0" max="100" value="100" aria-label="Opacity slider"><select class="w-mode" aria-label="Blend mode"><option>Normal</option></select></div>
    <table class="mtable">
      <tr class="r1"><td class="c1"><svg width="30" height="31" viewBox="0 0 30 32"><path d="M0 1l12 13-10-3zM0 1v9" fill="none" stroke="#919191" stroke-width="2"/><rect x="17" y="4" width="11" height="10" rx="2" fill="#919191"/><rect x="18" y="19" width="10" height="9" rx="2" fill="none" stroke="#919191"/></svg></td><td class="c2"></td><td class="c3"><div class="layer"><svg width="22" height="29" viewBox="0 0 22 29"><text x="0" y="12" fill="#ccc" font-size="11">C.</text><path d="M7 19h15v10H7z" fill="#000"/><path d="M1 16h11v8H1z" fill="#fff" stroke="#000"/><use href="#pencil" x="11" y="1" width="11" height="12"/></svg></div></td></tr>
      <tr class="r2"><td class="c1"><div class="mrow"><svg class="i24"><use href="#mball"/><path d="M19 1h4v3h-4z" fill="#f59c38"/></svg><svg class="i14"><use href="#pencil"/></svg><span class="nm cur">Mat.1</span><i class="tri"></i></div></td><td class="c2"></td><td class="c3"><div class="layer"><svg width="22" height="22" viewBox="0 0 22 22"><path d="M1 1h20v20H1z" fill="#8e8e8e"/><ellipse cx="11" cy="11" rx="7" ry="6" fill="none" stroke="#b5b5b5" stroke-dasharray="2 1"/><path d="M7 9h8M7 13h8" stroke="#a5a5a5" stroke-dasharray="1 2"/></svg></div></td></tr>
      <tr class="r2"><td class="c1"><div class="mrow"><svg class="i24"><use href="#mgreen"/><path d="M19 1h4v3h-4z" fill="#fff"/></svg><svg class="i14" viewBox="0 0 14 14"><path d="M1 1l12 12M13 1L1 13" stroke="#d8545c" stroke-width="1.800"/></svg><span class="nm">Mat</span><i class="tri"></i></div></td><td class="c2"></td><td class="c3"></td></tr>
    </table>
  </section>

  <section class="dock attrs">
    <div class="tabs"><button class="act">Attributes</button></div>
    <div class="bar"><svg class="burger"><use href="#burger"/></svg><nav class="menu"><button>Mode</button><button>Edit</button><button>User Data</button></nav>
      <div class="navi big"><svg class="lt"><use href="#arrow"/></svg><svg class="flip dk2"><use href="#arrow"/></svg><svg class="upr dk2"><use href="#arrow"/></svg><svg><use href="#glass"/></svg><svg><use href="#lock"/></svg><svg><use href="#target"/></svg><svg><use href="#plusbox"/></svg></div></div>
    <div class="objname"><svg width="22" height="22"><use href="#mball"/></svg>Material [Mat.1]</div>
    <div class="seg s6"><button>Basic</button><button class="on">Color</button><button>Reflectance</button><button>Illumination</button><button>Editor</button><button>Assign</button></div>
    <div class="ascroll">
      <div class="abody">
        <div class="prev"><svg class="cv"><use href="#chev"/></svg><svg class="ball" viewBox="0 0 121 121"><path d="M0 0h121v121H0z" fill="url(#floor)"/><path d="M0 84h121v37H0z" fill="#54606d"/><path d="M0 88h24v4H0zM48 88h24v4H48zM92 86h29v4H92zM20 94h26v5H20zM100 94h21v5h-21zM0 100h22v6H0zM90 101h20v6H90zM14 109h46l-8 12H8zM96 110h20l5 11h-20z" fill="#7f8993"/><ellipse cx="68" cy="113" rx="42" ry="6" fill="#20252c" opacity=".6"/><circle cx="61" cy="61" r="52" fill="url(#ball)"/><circle cx="61" cy="61" r="52" fill="url(#rim)" opacity=".7"/></svg></div>
        <h3>Color</h3>
        <div class="crow"><label class="rad"><input type="radio" checked>Color . . . .</label><svg class="cv"><use href="#chev"/></svg><div class="swatch"></div></div>
        <div class="ctools">
          <button aria-label="Compact"><svg viewBox="0 0 20 20"><path d="M3 10h14M6 3l4 4 4-4M6 17l4-4 4 4" fill="none" stroke="#333" stroke-width="2"/></svg></button>
          <button class="g25 clear" aria-label="Color wheel"><svg viewBox="0 0 20 20"><circle cx="10" cy="10" r="6" fill="none" stroke="#919191" stroke-width="7"/><path d="M10 0v20M0 10h20M3 3l14 14M17 3L3 17" stroke="#3d3d3d"/><circle cx="10" cy="10" r="3" fill="#3d3d3d"/></svg></button>
          <button class="clear" aria-label="Spectrum"><svg viewBox="0 0 20 20"><path d="M0 0h20v20H0z" fill="url(#fade)"/></svg></button>
          <button aria-label="From picture"><svg viewBox="0 0 20 20"><path d="M0 20l6-8 3 3 5-6 6 11z" fill="#3d3d3d"/></svg></button>
          <button class="g25 tx">RGB</button><button class="tx hsv">HSV</button><button class="tx">K</button>
          <button aria-label="Mixer"><svg viewBox="0 0 20 20"><path d="M3 5h4v4H3zM8 5h4v4H8zM13 5h4v4h-4zM2 13h16v1H2zM8 12h3v4H8z" fill="#333"/></svg></button>
          <button class="tx">#</button>
          <button aria-label="Swatches"><svg viewBox="0 0 20 20"><path d="M3 3h4v4H3zM8 3h4v4H8zM13 3h4v4h-4zM3 8h4v4H3zM8 8h4v4H8zM13 8h4v4h-4zM3 13h4v4H3z" fill="#333"/></svg></button>
          <button class="g25 clear" aria-label="Pick color"><svg viewBox="0 0 20 20"><path d="M12 4l4-4 4 4-4 4 1 1-2 2-6-6 2-2zM10 6l4 4-9 9-4 1 1-5z" fill="#a5a5a5"/><path d="M10 8l2 2-7 7-2 1 1-3z" fill="#3d3d3d"/></svg></button>
        </div>
        <div class="hrow"><label for="hh">H</label><div class="num"><input id="hh" value="0 °"><svg><use href="#spin"/></svg></div><input class="sl hue" type="range" value="0" aria-label="Hue"></div>
        <div class="hrow"><label for="ss">S</label><div class="num"><input id="ss" value="0 %"><svg><use href="#spin"/></svg></div><input class="sl sat" type="range" value="0" aria-label="Saturation"></div>
      </div>
      <div class="sbar"><svg class="flipv"><use href="#chev"/></svg><i></i><svg><use href="#chev"/></svg></div>
    </div>
  </section>

  <section class="dock uvm">
    <div class="tabs"><button class="act">UV Mapping</button><button>Layers</button><button>Brushes</button><button>Swatches</button></div>
    <div class="bar"><svg class="burger"><use href="#burger"/></svg></div>
    <div class="seg s5"><button>Optimal Mapping</button><button>Relax UV</button><button class="on">Projection</button><button>Transform</button><button>UV Commands</button></div>
    <h3>Projection</h3>
    <div class="pgrid"><button class="btn">Sphere</button><button class="btn">Cylinder</button><button class="btn">Frontal</button><button class="btn">Flat</button><button class="btn">Cubic</button><button class="btn">Cubic 2</button><button class="btn">Box</button><button class="btn">Shrink</button></div>
    <div class="fit"><label><input type="checkbox">Fit to Selection</label><select class="w-sys" aria-label="System"><option>Object System</option></select></div>
  </section>
</div>

<footer class="status"><svg class="burger"><use href="#burger"/></svg>Saves selected texture as...</footer>
</body>
</html>
```
FILE: styles.css
```css
* { box-sizing: border-box; }
body {
  margin: 0; min-height: 100vh; display: flex; flex-direction: column;
  background: #3d3d3d; color: #c8c8c8;
  font: 11px/16px "Noto Sans CJK KR", "Noto Sans", sans-serif;
}
.defs { position: absolute; width: 0; height: 0; }
h1, h2, h3 { margin: 0; font-weight: 400; font-size: 12px; }
h1 { font-size: 13px; }
button { font: inherit; color: inherit; background: none; border: 0; padding: 0; margin: 0; white-space: nowrap; }
svg { display: block; flex: none; }
input, select { font: inherit; color: inherit; margin: 0; }
hr { border: 0; border-top: 1px solid #555; margin: 0; }
.i12 { width: 12px; height: 12px; }
.i14 { width: 14px; height: 14px; }
.i16 { width: 16px; height: 16px; }
.i24 { width: 24px; height: 24px; }
.dim { color: #919191; }
.y { color: #d4d68a; }

.titlebar { display: flex; align-items: center; height: 23px; background: #fff; color: #111; padding: 0 18px 2px 2px; gap: 5px; }
.winbtns { margin-left: auto; display: flex; gap: 34px; }

.menubar { display: flex; justify-content: space-between; align-items: center; height: 23px; padding: 0 2px 1px 8px; }
.menu { display: flex; gap: 13px; align-items: center; }
.picks { display: flex; align-items: center; gap: 6px; }
.picks .lay { margin-left: 27px; }
select {
  appearance: none; height: 18px; border: 1px solid #333; border-radius: 3px; padding: 0 16px 0 6px; line-height: 14px;
  background: #5a5a5a url("data:image/svg+xml,%3Csvg xmlns='http://www.w3.org/2000/svg' width='8' height='6'%3E%3Cpath d='M.5 1L4 4.500 7.500 1' fill='none' stroke='%23ddd' stroke-width='1.500'/%3E%3C/svg%3E") no-repeat right 4px center;
}
.w-space { width: 167px; }
.w-layout { width: 165px; }
.w-mode { width: 79px; }
.w-sys { width: 128px; }

.work { flex: 1; display: flex; }
.side { width: 39px; padding: 5px 3px 4px 1px; display: flex; flex-direction: column; }
.side .group { flex-direction: column; margin-bottom: 12px; width: 34px; }
.side .group:last-child { margin-bottom: 0; }
.grip-h { height: 4px; margin: 0 3px 4px; background: radial-gradient(circle, #888 1px, transparent 1px) 0 0 / 3px 3px; opacity: .6; }
.grip-v { width: 5px; height: 28px; margin: 3px 3px 0 0; background: radial-gradient(circle, #888 1px, transparent 1px) 0 0 / 3px 3px; opacity: .6; }
.group { display: flex; gap: 2px; background: #4b4b4b; border-radius: 3px; margin-right: 12px; overflow: hidden; }
.group.tight { margin-right: 4px; }
.group button { width: 34px; height: 34px; background: #5a5a5a; position: relative; }
.group svg { width: 34px; height: 34px; }
.group .more::after { content: ""; position: absolute; right: 1px; bottom: 1px; border: 3px solid #161616; border-top-color: transparent; border-left-color: transparent; }
.group .on { background: #88a3cf; }
.group .cream { background: #dcdcab; }
.group .wide { width: 51px; display: flex; align-items: center; gap: 1px; }
.group .wide .i14 { width: 14px; height: 14px; }
.group .dk { color: #161616; }
.group .off { color: #484848; }
.group .faint svg { opacity: .25; }
.flip { transform: scaleX(-1); }
.flipv { transform: scaleY(-1); }
.or { color: #f59c38; }
.group .type { font: 28px/34px "Liberation Serif", serif; color: #f59c38; }
.b3d span { position: absolute; right: 1px; bottom: 0; font: 700 14px/16px "Liberation Sans", sans-serif; color: #eee; }

.pane { display: flex; flex-direction: column; min-width: 0; }
.pane.left { flex: 937 1 0; }
.pane.right { flex: 941 1 0; margin-left: 3px; }
.tools { display: flex; padding: 5px 0 4px 1px; height: 43px; }
.panel { flex: 1; display: flex; flex-direction: column; border-top: 1px solid #4f4f4f; border-left: 1px solid #4f4f4f; }
.bar { display: flex; align-items: center; height: 22px; padding-left: 6px; }
.burger { width: 14px; height: 11px; color: #8a8a8a; margin-right: 10px; }
.burger.lit { color: #e5e5e5; margin-right: 4px; }
.navi { margin-left: auto; display: flex; gap: 6px; padding-right: 3px; color: #8a8a8a; }
.navi svg { width: 14px; height: 14px; }
.view3d { flex: 1; position: relative; overflow: hidden; border: 1px solid #848484; background: #434343; margin-bottom: 3px; }
.tag { position: absolute; background: #383838; border-radius: 3px; padding: 0 4px; color: #ddd; }
.tl { left: 0; top: 1px; }
.br { right: 2px; bottom: 3px; }
.leafL { position: absolute; left: 150px; top: 67px; width: 788px; height: 486px; stroke: #f59b36; stroke-width: 1.5px; }
.leafR { position: absolute; left: -3px; top: 96px; width: 600px; height: 370px; stroke: #f5a04a; stroke-width: 1.4px; }
.axes { position: absolute; width: 40px; height: 44px; overflow: visible; }
.axL { left: 25px; bottom: 25px; }

.dialog { position: absolute; left: 625px; top: 135px; width: 309px; height: 193px; background: #3d3d3d; box-shadow: 0 0 0 1px #2b2b2b; overflow: hidden; padding-bottom: 36px; }
.dtitle { display: flex; align-items: center; gap: 5px; height: 30px; padding: 0 8px 1px; background: #fff; color: #111; }
.dtitle button { margin-left: auto; }
.drow { display: flex; align-items: center; padding: 5px 5px 0 4px; height: 23px; }
.drow label { width: 64px; white-space: nowrap; }
.combo { position: relative; width: 168px; margin-right: 6px; }
.combo select { width: 168px; display: block; background-color: #6a6a6a; }
.drop { position: absolute; z-index: 2; left: -1px; top: 18px; width: 171px; background: #3d3d3d; border: 1px solid #5a5a5a; border-top: 0; padding: 0 2px; }
.drop [role=option] { height: 22px; line-height: 22px; padding-left: 7px; position: relative; white-space: nowrap; }
.drop hr { margin: 3px 2px; }
.drop .sel, .popup .sel { background: #999; color: #111; }
.mark { position: absolute; overflow: visible; fill: none; stroke: #f00; stroke-width: 3px; stroke-dasharray: 12 6; }
.mk1 { left: -3px; top: -4px; width: 70px; height: 29px; }
.mk2 { left: -4px; top: 168px; width: 124px; height: 26px; }
.btn { background: #5a5a5a; border: 1px solid #333; border-radius: 3px; height: 20px; line-height: 16px; }
.drow .btn { width: 64px; height: 19px; }
.dbox { margin: 4px 4px 0; height: 100px; border: 1px solid #4f4f4f; padding: 4px; }

.host { position: relative; margin-right: -7px; }
.open { background: #999; color: #111; padding: 3px 7px; }
.popup { position: absolute; z-index: 3; left: 0; top: 22px; width: 180px; background: #3d3d3d; border: 1px solid #585858; border-radius: 2px; padding: 2px 2px 3px 2px; color: #c8c8c8; }
.popup .grip-h { margin-bottom: 3px; }
.popup button { display: flex; align-items: center; gap: 5px; height: 22px; width: 174px; text-align: left; position: relative; }
.popup button svg { width: 21px; height: 22px; padding: 2px; background: #5a5a5a; }
.popup hr { margin: 3px 2px; }
.popup .sub::after { content: ""; position: absolute; right: 4px; top: 8px; border: 3px solid transparent; border-left: 4px solid #ddd; }
.texview { flex: 1; position: relative; }
.tlabel { position: absolute; left: 5px; top: 0; color: #919191; }
.texture { position: absolute; left: 182px; top: 2px; width: 575px; height: 576px; background: #8c8c8c; border-bottom: 1px solid #a44; border-left: 1px solid #568a66; }
.texture span { position: absolute; right: 4px; top: 0; color: #c4c4c4; }
.axR { left: 25px; bottom: 24px; }
.tstatus { height: 19px; margin-bottom: 1px; border: solid #4f4f4f; border-width: 1px 0; padding-left: 7px; }

.lower { display: grid; grid-template-columns: 642fr 676fr 602fr; height: 343px; }
.dock { border: 1px solid #4f4f4f; border-width: 0 2px 1px 1px; min-width: 0; margin-right: 1px; }
.tabs { display: flex; height: 23px; background: #333; border-bottom: 1px solid #4f4f4f; margin: 0 -2px 0 -1px; padding: 2px 0 0; color: #868686; }
.tabs button { padding: 0 7px; height: 21px; }
.tabs .act { background: #3d3d3d; border: 1px solid #4f4f4f; border-bottom: 0; border-radius: 3px 3px 0 0; color: #ddd; padding: 0 6px; }
.lower .bar { height: 23px; border-bottom: 1px solid #4f4f4f; }
.oprow { display: flex; padding: 4px 3px 2px 2px; height: 24px; align-items: center; }
.num { position: relative; width: 61px; height: 18px; }
.num input { width: 100%; height: 18px; background: #2e2e2e; border: 1px solid #4f4f4f; border-radius: 3px; padding: 0 5px; display: block; }
.num svg { position: absolute; right: 1px; top: 2px; width: 8px; height: 14px; }
input[type=range] { appearance: none; border-radius: 0; }
.opac { flex: 1; min-width: 0; height: 18px; background: #666; margin-right: 4px; }
.opac::-webkit-slider-thumb { appearance: none; width: 3px; height: 18px; background: #88a3cf; }
.mtable { border-collapse: collapse; width: 100%; border-top: 1px solid #4f4f4f; }
.mtable td { padding: 0; border-bottom: 1px solid #4f4f4f; border-right: 1px solid #4f4f4f; vertical-align: top; }
.mtable td:last-child { border-right: 0; }
.c1 { width: 94px; }
.c2 { width: 32px; }
.r1 { height: 32px; }
.r2 { height: 25px; }
.mrow { display: flex; align-items: center; padding-left: 1px; height: 24px; }
.mrow .i14 { margin: -6px 3px 0 2px; }
.nm { background: #5a5a5a; height: 24px; line-height: 24px; padding: 0 3px; }
.nm.cur { background: #88a3cf; color: #111; }
.tri { border: 4px solid transparent; border-left: 4px solid #ddd; margin: 0 0 0 auto; }
.layer { border: 1px solid #88a3cf; width: 24px; margin-left: 1px; }

.navi.big { gap: 6px; }
.navi.big svg { width: 15px; height: 16px; }
.lt { color: #aaa; }
.dk2 { color: #5a5a5a; }
.upr { transform: rotate(90deg); }
.objname { display: flex; align-items: center; gap: 4px; padding: 4px 3px 2px; height: 28px; }
.seg { display: grid; gap: 1px; background: #444; border: 1px solid #333; border-radius: 3px; margin-left: 3px; height: 20px; }
.seg button { background: #5a5a5a; height: 18px; line-height: 18px; overflow: hidden; }
.seg .on { background: #88a3cf; color: #111; }
.s6 { width: 402px; grid-template-columns: repeat(6, 1fr); }
.s5 { width: 486px; grid-template-columns: repeat(5, 1fr); margin-top: 4px; }
.ascroll { display: flex; padding-right: 5px; }
.abody { flex: 1; min-width: 0; padding: 2px 7px 0 4px; }
.prev { display: flex; gap: 2px; }
.ball { width: 121px; height: 121px; }
.cv { width: 8px; height: 6px; color: #ddd; margin-top: 4px; }
h3 { color: #eee; font-size: 11px; font-weight: 700; }
.abody h3 { margin-top: 7px; }
.crow { display: flex; align-items: center; height: 22px; }
.crow .cv { margin: 0 1px 6px 0; }
.rad { width: 88px; display: flex; align-items: center; gap: 8px; padding-top: 4px; }
.rad input { appearance: none; width: 14px; height: 14px; border-radius: 50%; border: 1px solid #919191; background: radial-gradient(circle, #919191 4px, transparent 5px); }
.swatch { width: 75px; height: 17px; background: #c8c8c8; border: 1px solid #555; }
.ctools { display: flex; gap: 6px; margin: 2px 0 0 96px; padding-bottom: 4px; border-bottom: 1px solid #555; }
.ctools button { width: 20px; height: 20px; background: #888; color: #3a3a3a; }
.ctools .clear { background: none; }
.ctools .g25 { margin-left: 19px; }
.ctools .tx { font-size: 10px; font-weight: 500; line-height: 20px; text-align: center; }
.ctools .hsv { background: #eee; color: #222; }
.hrow { display: flex; align-items: center; height: 22px; padding-left: 96px; }
.ctools + .hrow { margin-top: 4px; }
.hrow label { width: 13px; }
.hrow .num { width: 69px; margin-right: 4px; }
.sl { flex: 1; min-width: 0; height: 16px; }
.sl::-webkit-slider-thumb { appearance: none; width: 3px; height: 20px; background: #fff; border: 1px solid #000; }
.hue { background: linear-gradient(90deg, #f00, #ff0 17%, #0f0 33%, #0ff 50%, #00f 67%, #f0f 83%, #f00); }
.sat { background: linear-gradient(90deg, #c8c8c8, #c80000); }
.sbar { display: flex; flex-direction: column; align-items: center; width: 12px; color: #919191; padding: 5px 0; }
.sbar svg { width: 8px; height: 6px; }
.sbar i { width: 4px; height: 98px; background: #5a5a5a; border-radius: 2px; margin: 4px 0 auto; }

.uvm h3 { margin: 6px 0 4px 5px; }
.pgrid { display: grid; grid-template-columns: repeat(4, 64px); gap: 3px 3px; margin-left: 3px; }
.fit { display: flex; gap: 6px; margin: 3px 0 0 3px; }
.fit label { display: flex; gap: 4px; width: 90px; white-space: nowrap; }
.fit input { appearance: none; width: 12px; height: 12px; border: 1px solid #919191; border-radius: 2px; flex: none; margin-top: 1px; }

.status { display: flex; align-items: center; height: 24px; border: solid #4f4f4f; border-width: 1px 0; padding-left: 5px; }
```
